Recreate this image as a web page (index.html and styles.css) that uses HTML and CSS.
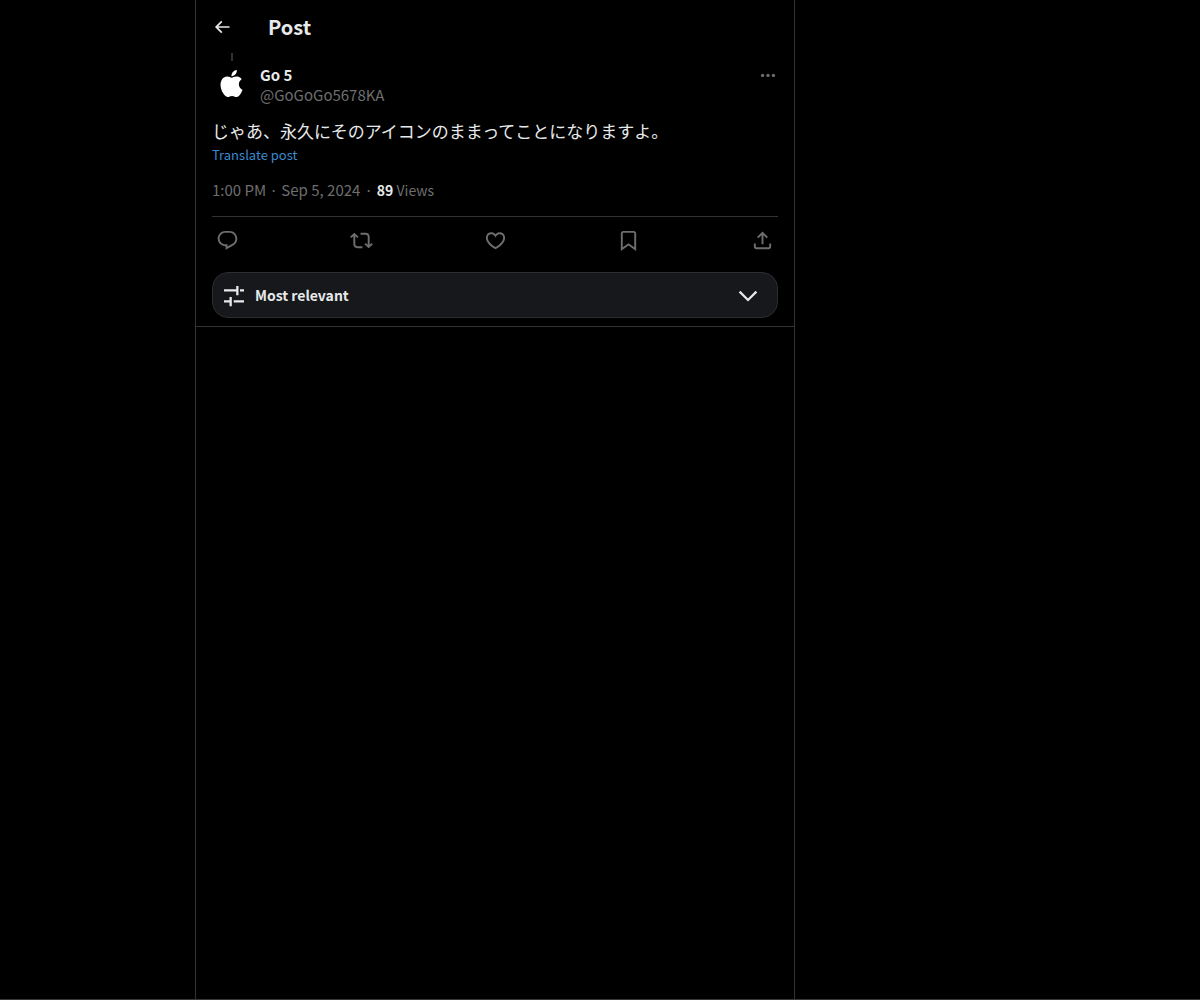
FILE: index.html
```html
<!DOCTYPE html>
<html lang="ja">
<head>
    <meta charset="UTF-8">
    <meta name="viewport" content="width=device-width, initial-scale=1.0">
    <title>Post</title>
    <link rel="stylesheet" href="styles.css">
</head>
<body>
    <main class="column">
        <header class="topbar">
            <button type="button" class="back" aria-label="Back">
                <svg viewBox="0 0 24 24"><path d="M7.414 13l5.043 5.04-1.414 1.42L3.586 12l7.457-7.46 1.414 1.42L7.414 11H21v2H7.414z"/></svg>
            </button>
            <h1>Post</h1>
        </header>
        <article class="post">
            <div class="thread-line"></div>
            <div class="author">
                <a href="#" class="avatar" aria-label="Go 5">
                    <svg viewBox="0 0 24 24"><path d="M12.152 6.896c-.948 0-2.415-1.078-3.96-1.04-2.04.027-3.91 1.183-4.961 3.014-2.117 3.675-.546 9.103 1.519 12.09 1.013 1.454 2.208 3.09 3.792 3.039 1.52-.065 2.09-.987 3.935-.987 1.831 0 2.35.987 3.96.948 1.637-.026 2.676-1.48 3.676-2.948 1.156-1.688 1.636-3.325 1.662-3.415-.039-.013-3.182-1.221-3.22-4.857-.026-3.04 2.48-4.494 2.597-4.559-1.429-2.09-3.623-2.324-4.39-2.376-2-.156-3.675 1.09-4.61 1.09zM15.53 3.83c.843-1.012 1.4-2.427 1.245-3.83-1.207.052-2.662.805-3.532 1.818-.78.896-1.454 2.338-1.273 3.714 1.338.104 2.715-.688 3.559-1.701"/></svg>
                </a>
                <div class="names">
                    <a href="#" class="name">Go 5</a>
                    <a href="#" class="handle">@GoGoGo5678KA</a>
                </div>
                <button type="button" class="more" aria-label="More">
                    <svg viewBox="0 0 24 24"><circle cx="5.500" cy="12.500" r="2"/><circle cx="12" cy="12.500" r="2"/><circle cx="18.500" cy="12.500" r="2"/></svg>
                </button>
            </div>
            <p class="text">じゃあ、永久にそのアイコンのままってことになりますよ。</p>
            <button type="button" class="translate">Translate post</button>
            <div class="meta">
                <a href="#">1:00 PM · Sep 5, 2024</a><span class="dot">·</span><span class="views"><b>89</b> Views</span>
            </div>
            <div class="actions">
                <button type="button" aria-label="Reply">
                    <svg viewBox="0 0 24 24"><path d="M1.751 10c0-4.42 3.584-8 8.005-8h4.366c4.49 0 8.129 3.64 8.129 8.13 0 2.96-1.607 5.68-4.196 7.11l-8.054 4.46v-3.69h-.067c-4.49.1-8.183-3.51-8.183-8.01zm8.005-6c-3.317 0-6.005 2.69-6.005 6 0 3.37 2.77 6.08 6.138 6.01l.351-.01h1.761v2.3l5.087-2.81c1.951-1.08 3.163-3.13 3.163-5.36 0-3.39-2.744-6.13-6.129-6.13H9.756z"/></svg>
                </button>
                <button type="button" aria-label="Repost">
                    <svg viewBox="0 0 24 24"><path d="M4.5 3.88l4.432 4.14-1.364 1.46L5.5 7.55V16c0 1.1.896 2 2 2H13v2H7.5c-2.209 0-4-1.79-4-4V7.55L1.432 9.48.068 8.02 4.5 3.88zM16.5 6H11V4h5.5c2.209 0 4 1.79 4 4v8.45l2.068-1.93 1.364 1.46-4.432 4.14-4.432-4.14 1.364-1.46 2.068 1.93V8c0-1.1-.896-2-2-2z"/></svg>
                </button>
                <button type="button" aria-label="Like">
                    <svg viewBox="0 0 24 24"><path d="M16.697 5.5c-1.222-.06-2.679.51-3.89 2.16l-.805 1.09-.806-1.09C9.984 6.01 8.526 5.44 7.304 5.5c-1.243.07-2.349.78-2.91 1.91-.552 1.12-.633 2.78.479 4.82 1.074 1.97 3.257 4.27 7.129 6.61 3.87-2.34 6.052-4.64 7.126-6.61 1.111-2.04 1.03-3.7.477-4.82-.561-1.13-1.666-1.84-2.908-1.91zm4.187 7.69c-1.351 2.48-4.001 5.12-8.379 7.67l-.503.3-.504-.3c-4.379-2.55-7.029-5.19-8.382-7.67-1.36-2.5-1.41-4.86-.514-6.67.887-1.79 2.647-2.91 4.601-3.01 1.651-.09 3.368.56 4.798 2.01 1.429-1.45 3.146-2.1 4.796-2.01 1.954.1 3.714 1.22 4.601 3.01.896 1.81.846 4.17-.514 6.67z"/></svg>
                </button>
                <button type="button" aria-label="Bookmark">
                    <svg viewBox="0 0 24 24"><path d="M4 4.5C4 3.12 5.119 2 6.5 2h11C18.881 2 20 3.12 20 4.5v18.44l-8-5.71-8 5.71V4.5zM6.5 4c-.276 0-.5.22-.5.5v14.56l6-4.29 6 4.29V4.5c0-.28-.224-.5-.5-.5h-11z"/></svg>
                </button>
                <button type="button" aria-label="Share">
                    <svg viewBox="0 0 24 24"><path d="M12 2.59l5.7 5.7-1.41 1.42L13 6.41V16h-2V6.41l-3.3 3.3-1.41-1.42L12 2.59zM21 15l-.02 3.51c0 1.38-1.12 2.49-2.5 2.49H5.5C4.11 21 3 19.88 3 18.5V15h2v3.5c0 .28.22.5.5.5h12.98c.28 0 .5-.22.5-.5L19 15h2z"/></svg>
                </button>
            </div>
            <button type="button" class="sort">
                <svg viewBox="0 0 24 24"><path d="M2 6.300h12.200V3h2.300v9.300h-2.300V8.600H2zM18 6.300h4v2.300h-4zM2 17.300h5.500V14h2.300v9.300H7.500v-3.700H2zM11.700 17.300H22v2.300H11.700z"/></svg>
                <span>Most relevant</span>
                <svg viewBox="0 0 24 24"><path d="M2.800 9.400l1.600-1.600L12 15.400l7.600-7.600 1.600 1.600L12 18.600z"/></svg>
            </button>
        </article>
    </main>
</body>
</html>
```
FILE: styles.css
```css
*{margin: 0; padding: 0; box-sizing: border-box;}
body{
    display: flex;
    min-height: 100vh;
    padding-left: 195px;
    border-bottom: 1px solid #3a3839;
    background-color: #000;
    color: #e7e9ea;
    font-family: "Noto Sans CJK JP", "Noto Sans", sans-serif;
    font-size: 15px;
    line-height: 20px;
}
a{color: inherit; text-decoration: none;}
button{
    border: 0;
    background: none;
    color: inherit;
    font: inherit;
    cursor: pointer;
}
svg{
    display: block;
    fill: currentColor;
}
.column{
    width: 100%;
    max-width: 600px;
    border-left: 1px solid #333;
    border-right: 1px solid #333;
}

/* header */
.topbar{
    display: flex;
    align-items: center;
    gap: 36px;
    height: 53px;
    padding: 0 16px;
}
.topbar h1{
    font-size: 20px;
    line-height: 24px;
}
.back svg{width: 20px; height: 20px;}

/* post */
.post{
    padding: 0 16px 8px;
    border-bottom: 1px solid #333;
}
.thread-line{
    width: 2px;
    height: 8px;
    margin-left: 19px;
    background-color: #333;
}
.author{
    display: flex;
    align-items: flex-start;
    gap: 8px;
    padding-top: 4px;
}
.avatar{
    display: flex;
    justify-content: center;
    width: 40px;
    height: 40px;
    padding: 5px 2px 0 0;
    border-radius: 50%;
    color: #fff;
}
.avatar svg{width: 27px; height: 27px;}
.names{
    display: flex;
    flex: 1;
    flex-direction: column;
    align-items: flex-start;
}
.name{font-weight: 700;}
.handle, .more, .meta, .actions{color: #6e6e6e;}
.more svg{width: 20px; height: 20px;}
.text{
    margin-top: 14px;
    font-size: 17px;
    line-height: 24px;
}
.translate{
    display: block;
    margin-top: 4px;
    color: #3b8ad0;
    font-size: 13px;
    line-height: 16px;
}
.meta{
    padding: 17px 0 16px;
}
.dot{padding: 0 4px;}
.views{font-size: 14px;}
.meta b{color: #e7e9ea;}
.actions{
    display: flex;
    align-items: center;
    justify-content: space-between;
    height: 48px;
    border-top: 1px solid #333;
}
.actions button{padding: 0 4px;}
.actions svg{width: 23px; height: 23px;}
.sort{
    display: flex;
    align-items: center;
    gap: 9px;
    width: 100%;
    margin-top: 8px;
    padding: 10px 17px 10px 9px;
    border: 1px solid #2b2d30;
    border-radius: 16px;
    background-color: #16181b;
    font-size: 14px;
    font-weight: 700;
    line-height: 24px;
    text-align: left;
}
.sort span{flex: 1;}
.sort svg{width: 24px; height: 24px;}
```
